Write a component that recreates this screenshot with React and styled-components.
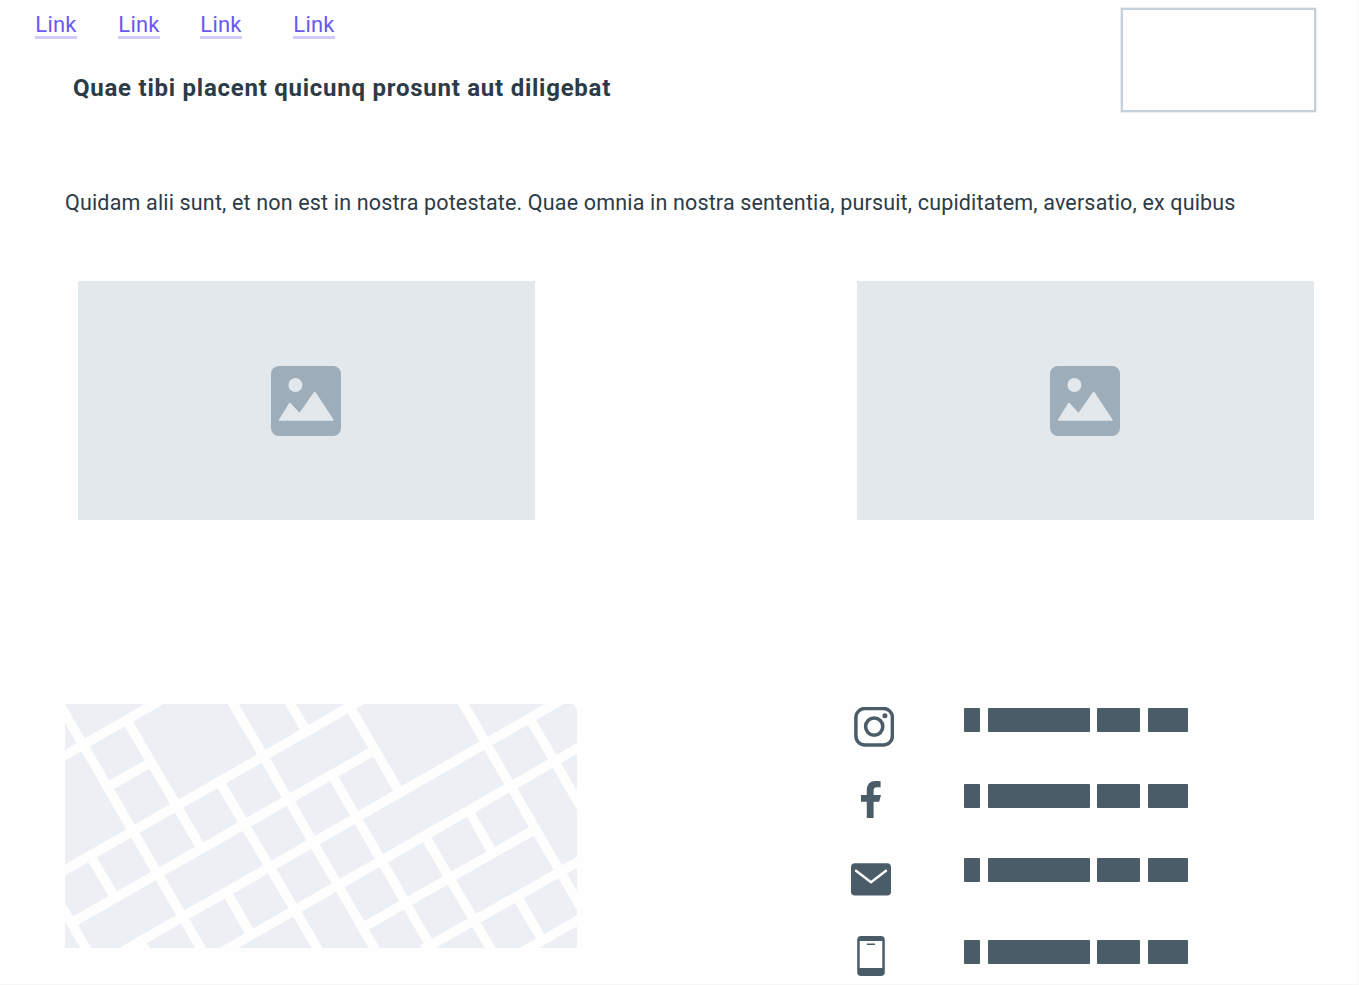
import React from "react";
import styled, { createGlobalStyle } from "styled-components";

const GlobalStyle = createGlobalStyle`
  * { box-sizing: border-box; }
  body {
    margin: 0;
    background: #fefefe;
    font-family: Roboto, "Liberation Sans", sans-serif;
  }
`;

const Page = styled.main`
  width: 1359px;
  height: 985px;
  overflow: hidden;
  background: #fefefe;
  border-right: 1px solid #f9f9fa;
  border-bottom: 1px solid #f7f7f8;
`;

const Header = styled.header`
  display: flex;
  justify-content: space-between;
  height: 188px;
  padding: 8px 42px 0 35px;
`;

const Nav = styled.nav`
  display: flex;
  padding-top: 3px;
`;

const NavLink = styled.a`
  width: 42px;
  height: 28px;
  margin-right: ${(p) => p.$gap}px;
  border-bottom: 3px solid #d2cbfb;
  color: #6a59f0;
  font-size: 22px;
  line-height: 27px;
  letter-spacing: 0.2px;
  text-align: center;
  text-decoration: none;
  white-space: nowrap;
`;

const Title = styled.h1`
  margin: 34px 0 0 38px;
  color: #2c3b47;
  font-size: 24px;
  line-height: 30px;
  font-weight: 700;
  letter-spacing: 0.75px;
  white-space: nowrap;
`;

const LogoFrame = styled.div`
  width: 195px;
  height: 104px;
  border: 2px solid #c4d0dc;
  box-shadow: 0 0 0 1px rgba(196, 208, 220, 0.35);
`;

const Intro = styled.p`
  margin: 0 0 0 65px;
  color: #2c3b47;
  font-size: 21.5px;
  line-height: 30px;
  letter-spacing: 0.165px;
  white-space: nowrap;
`;

const Gallery = styled.section`
  display: flex;
  justify-content: space-between;
  padding: 63px 44px 0 78px;
`;

const Picture = styled.div`
  display: flex;
  align-items: center;
  justify-content: center;
  width: 457px;
  height: 239px;
  padding-right: 1px;
  background: #e2e8ec;
`;

const Footer = styled.footer`
  display: flex;
  justify-content: space-between;
  padding: 183px 170px 0 65px;
`;

const MapView = styled.svg`
  display: block;
  width: 512px;
  height: 244px;
  margin-top: 1px;
`;

const Contacts = styled.div`
  display: grid;
  grid-template-columns: 113px 224px;
  grid-template-rows: 74px 77px 78px 52px;
  padding-top: 3px;
`;

const IconSlot = styled.div`
  padding: ${(p) => p.$top}px 0 0 ${(p) => p.$left}px;
  svg { display: block; }
`;

const Bars = styled.div`
  display: flex;
  justify-content: space-between;
  width: 224px;
  padding-top: ${(p) => p.$top}px;
`;

const Bar = styled.span`
  width: ${(p) => p.$width}px;
  height: 24px;
  border-radius: 1px;
  background: #4b5c69;
`;

const links = [41, 40, 51, 0];

const roads = [
  "M60 758 L161 700.2",
  "M60 872.9 L362 699.8",
  "M72 922.5 L374 750.7",
  "M123 951.2 L562 699.7",
  "M223 951.3 L582 745.5",
  "M364.5 926.5 L533 830.5",
  "M422 950 L582 859.5",
  "M523 951.5 L582 918",
  "M111 785 L151 762.5",
  "M62 906.7 L88 952",
  "M60 705 L203 952",
  "M129 724 L200 846",
  "M92 859 L114 896",
  "M231 700 L376.5 952",
  "M221.5 785 L319.5 952",
  "M288 700 L304.5 728",
  "M351 709 L399.5 792",
  "M333.5 777.5 L434 952",
  "M461 700 L582 909.5",
  "M531.5 721.5 L582 809",
  "M424.5 835 L492.5 952",
  "M470 813 L490.5 849.5",
  "M517.5 897.5 L543 941",
  "M228.5 895.5 L250 932.5",
  "M576.7 700 L584.5 713.5",
  "M140 941 L146.5 952",
];

function CityMap() {
  return (
    <MapView viewBox="65 704 512 244">
      <rect x="65" y="704" width="512" height="244" fill="#ecf0f5" />
      <path d={roads.join(" ")} fill="none" stroke="#fefefe" strokeWidth="9.5" />
    </MapView>
  );
}

function ImageIcon() {
  return (
    <svg width="70" height="70" viewBox="0 0 70 70">
      <rect width="70" height="70" rx="8" fill="#9eadba" />
      <circle cx="24.4" cy="19" r="7" fill="#e2e8ec" />
      <path
        d="M8.7 54 L18.9 37.5 L28.6 48 L43.7 26.4 L61.9 54 Z"
        fill="#e2e8ec"
        stroke="#e2e8ec"
        strokeWidth="1.6"
        strokeLinejoin="round"
      />
    </svg>
  );
}

function InstagramIcon() {
  return (
    <svg width="40" height="40" viewBox="0 0 40 40" fill="none" stroke="#4b5c69">
      <rect x="1.9" y="1.5" width="36.5" height="36.5" rx="9" strokeWidth="3.5" />
      <circle cx="20.2" cy="19.6" r="8.6" strokeWidth="3.6" />
      <circle cx="30.9" cy="8.8" r="2.5" fill="#4b5c69" stroke="none" />
    </svg>
  );
}

function FacebookIcon() {
  return (
    <svg width="20" height="37" viewBox="0 0 20 37">
      <path
        d="M5.8 37 V20.7 H0 V14.1 H5.8 V9.2 C5.8 3.2 9.2 0 14.6 0 C16.8 0 18.6 .1 19.6 .3 V6.2 H16 C13.2 6.2 12.6 7.7 12.6 9.8 V14.1 H20 L18.2 20.7 H12.6 V37 Z"
        fill="#4b5c69"
      />
    </svg>
  );
}

function MailIcon() {
  return (
    <svg width="40" height="33" viewBox="0 0 40 33">
      <rect y=".3" width="40" height="32.2" rx="4" fill="#4b5c69" />
      <path
        d="M5 7.7 L20 19.2 L35 7.7"
        fill="none"
        stroke="#fefefe"
        strokeWidth="2.4"
        strokeLinecap="round"
      />
    </svg>
  );
}

function PhoneIcon() {
  return (
    <svg width="28" height="40" viewBox="0 0 28 40">
      <rect x=".2" width="27.6" height="40" rx="4" fill="#4b5c69" />
      <rect x="2.7" y="5" width="22.6" height="27" fill="#fefefe" />
      <path d="M10.5 8.3 H17.5" stroke="#4b5c69" strokeWidth="1.6" strokeLinecap="round" />
    </svg>
  );
}

const contacts = [
  { Icon: InstagramIcon, left: 3, iconTop: 1, barTop: 2 },
  { Icon: FacebookIcon, left: 10, iconTop: 1, barTop: 4 },
  { Icon: MailIcon, left: 0, iconTop: 6, barTop: 1 },
  { Icon: PhoneIcon, left: 6, iconTop: 1, barTop: 5 },
];

export default function App() {
  return (
    <>
      <GlobalStyle />
      <Page>
        <Header>
          <div>
            <Nav>
              {links.map((gap, i) => (
                <NavLink key={i} $gap={gap}>Link</NavLink>
              ))}
            </Nav>
            <Title>Quae tibi placent quicunq prosunt aut diligebat</Title>
          </div>
          <LogoFrame />
        </Header>
        <Intro>
          Quidam alii sunt, et non est in nostra potestate. Quae omnia in nostra sententia, pursuit, cupiditatem, aversatio, ex quibus
        </Intro>
        <Gallery>
          <Picture><ImageIcon /></Picture>
          <Picture><ImageIcon /></Picture>
        </Gallery>
        <Footer>
          <CityMap />
          <Contacts>
            {contacts.map(({ Icon, left, iconTop, barTop }, i) => (
              <React.Fragment key={i}>
                <IconSlot $left={left} $top={iconTop}><Icon /></IconSlot>
                <Bars $top={barTop}>
                  <Bar $width={16} />
                  <Bar $width={102} />
                  <Bar $width={43} />
                  <Bar $width={40} />
                </Bars>
              </React.Fragment>
            ))}
          </Contacts>
        </Footer>
      </Page>
    </>
  );
}
